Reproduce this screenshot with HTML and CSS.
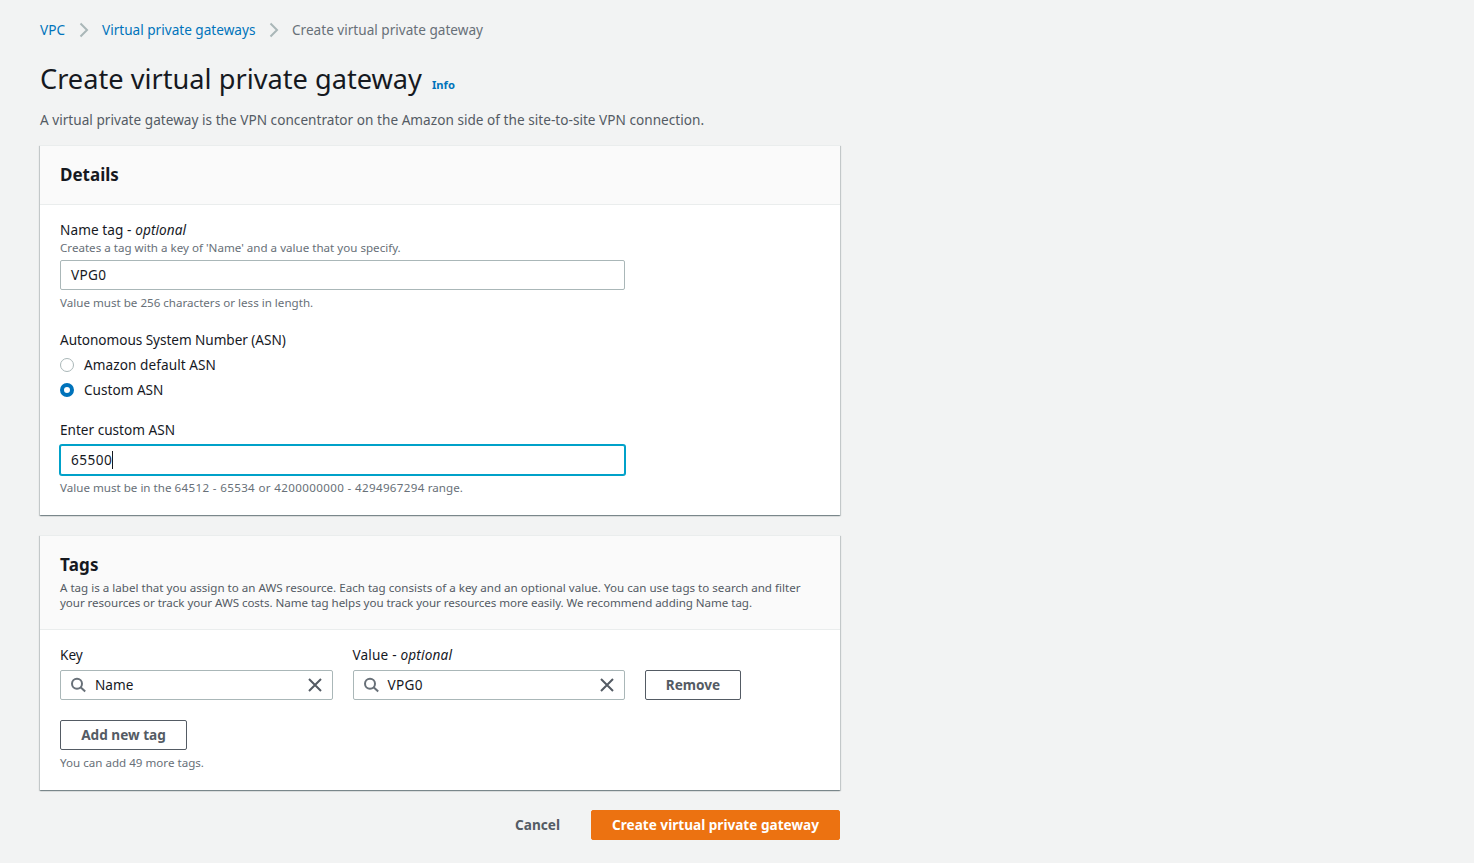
FILE: index.html
```html
<!DOCTYPE html>
<html lang="en">
<head>
<meta charset="utf-8">
<title>Create virtual private gateway</title>
<link rel="stylesheet" href="styles.css">
</head>
<body>
<main class="page">
  <nav class="breadcrumbs">
    <a class="crumb crumb-vpc" href="#">VPC</a>
    <svg class="chevron" width="10" height="16" viewBox="0 0 10 16"><path d="M1.500 1.500 8 8l-6.500 6.500"/></svg>
    <a class="crumb crumb-list" href="#">Virtual private gateways</a>
    <svg class="chevron" width="10" height="16" viewBox="0 0 10 16"><path d="M1.500 1.500 8 8l-6.500 6.500"/></svg>
    <span class="crumb crumb-current">Create virtual private gateway</span>
  </nav>
  <div class="title-row">
    <h1 class="title">Create virtual private gateway</h1>
    <a class="info" href="#">Info</a>
  </div>
  <p class="intro">A virtual private gateway is the VPN concentrator on the Amazon side of the site-to-site VPN connection.</p>

  <section class="card details">
    <header class="card-header"><h2 class="heading heading-details">Details</h2></header>
    <div class="card-body">
      <div class="field">
        <div class="label"><span class="t-name">Name tag - <em>optional</em></span></div>
        <div class="description">Creates a tag with a key of 'Name' and a value that you specify.</div>
        <div class="input"><span class="t-vpg">VPG0</span></div>
        <div class="hint">Value must be 256 characters or less in length.</div>
      </div>
      <div class="field asn">
        <div class="label t-asn">Autonomous System Number (ASN)</div>
        <div class="option"><span class="radio"></span><span class="t-default">Amazon default ASN</span></div>
        <div class="option"><span class="radio checked"></span><span>Custom ASN</span></div>
      </div>
      <div class="field">
        <div class="label">Enter custom ASN</div>
        <div class="input focused"><span class="t-number">65500</span><span class="caret"></span></div>
        <div class="hint">Value must be in the <span class="t-range">64512 - 65534 or 4200000000 - 4294967294</span> range.</div>
      </div>
    </div>
  </section>

  <section class="card tags">
    <header class="card-header">
      <h2 class="heading heading-tags">Tags</h2>
      <p class="tags-text">A tag is a label that you assign to an AWS resource. Each tag consists of a key and an optional value. You can use tags to search and filter<br><span class="t-line2">your resources or track your AWS costs. Name tag helps you track your resources more easily. We recommend adding Name tag.</span></p>
    </header>
    <div class="card-body">
      <div class="tag-row">
        <div class="tag-col">
          <div class="label">Key</div>
          <div class="input search">
            <svg class="lens" width="16" height="16" viewBox="0 0 16 16"><circle cx="6" cy="6.700" r="5"/><path d="m9.600 10.300 4.600 4.300"/></svg>
            <span class="search-text">Name</span>
            <svg class="clear" width="16" height="16" viewBox="0 0 16 16"><path d="m2 2 12 12M14 2 2 14"/></svg>
          </div>
        </div>
        <div class="tag-col">
          <div class="label"><span class="t-value">Value - <em>optional</em></span></div>
          <div class="input search">
            <svg class="lens" width="16" height="16" viewBox="0 0 16 16"><circle cx="6" cy="6.700" r="5"/><path d="m9.600 10.300 4.600 4.300"/></svg>
            <span class="search-text t-vpg">VPG0</span>
            <svg class="clear" width="16" height="16" viewBox="0 0 16 16"><path d="m2 2 12 12M14 2 2 14"/></svg>
          </div>
        </div>
        <button class="button remove">Remove</button>
      </div>
      <button class="button add">Add new tag</button>
      <div class="hint">You can add 49 more tags.</div>
    </div>
  </section>

  <footer class="actions">
    <button class="button cancel">Cancel</button>
    <button class="button primary">Create virtual private gateway</button>
  </footer>
</main>
</body>
</html>
```
FILE: styles.css
```css
* { box-sizing: border-box; }
body {
  margin: 0;
  background: #f2f3f3;
  color: #16191f;
  font: 13.6px/20px "Noto Sans", "Open Sans", sans-serif;
  white-space: nowrap;
}
a { color: #0073bb; text-decoration: none; }
h1, h2, p { margin: 0; }
.page { width: 840px; padding: 20px 0 0 40px; }
.breadcrumbs { display: flex; align-items: center; height: 20px; }
.crumb-vpc { width: 26px; }
.crumb-list { width: 154px; }
.chevron { margin: 0 13px; fill: none; stroke: #aab7b8; stroke-width: 2; overflow: visible; }
.crumb-current { color: #687078; }
.title-row { display: flex; align-items: baseline; height: 36px; margin-top: 21px; }
.title { font-size: 27.2px; line-height: 36px; font-weight: 400; }
.info { margin-left: 10px; font-size: 11.2px; font-weight: 700; }
.intro { margin-top: 13px; color: #545b64; letter-spacing: .024px; }

.card {
  width: 800px;
  background: #fff;
  border-top: 1px solid #eaeded;
  box-shadow: 0 1px 1px 0 rgba(0,28,36,.3), 1px 1px 1px 0 rgba(0,28,36,.15), -1px 1px 1px 0 rgba(0,28,36,.15);
}
.details { height: 370px; margin-top: 15px; }
.tags { height: 255px; margin-top: 20px; }
.card-header { background: #fafafa; border-bottom: 1px solid #eaeded; padding: 18px 20px 0; }
.details .card-header { height: 59px; }
.tags .card-header { height: 94px; }
.heading { font-size: 17px; line-height: 22px; font-weight: 700; }
.heading-tags { letter-spacing: .2px; }
.tags-text { margin-top: 4px; font-size: 11.6px; line-height: 15px; color: #545b64; }
.card-body { padding: 15px 20px 0; }
.label { height: 20px; }
.description { height: 20px; font-size: 11.6px; line-height: 16px; color: #687078; }
.input {
  display: flex; align-items: center;
  width: 565px; height: 30px; padding: 0 10px;
  background: #fff; border: 1px solid #aab7b8; border-radius: 2px;
}
.hint { margin-top: 5px; font-size: 11.6px; line-height: 16px; color: #687078; }
.asn { margin: 19px 0 20px; }
.option { display: flex; align-items: center; height: 20px; margin-top: 5px; }
.radio { width: 14px; height: 14px; margin-right: 10px; border: 1px solid #aab7b8; border-radius: 50%; background: #fff; }
.radio.checked { border: 4px solid #0073bb; }
.details .field:last-child .label { margin-bottom: 5px; }
.focused { border-color: #00a1c9; box-shadow: 0 0 0 1px #00a1c9; }
.caret { width: 1px; height: 18px; background: #16191f; }

/* per-string tracking */
.t-name { letter-spacing: .09px; }
.t-vpg { letter-spacing: .3px; }
.t-asn { letter-spacing: -.05px; }
.t-default { letter-spacing: .07px; }
.t-number { letter-spacing: .45px; }
.t-range { letter-spacing: .35px; }
.t-line2 { letter-spacing: -.057px; }
.t-value { letter-spacing: .17px; }

.tag-row { display: flex; align-items: flex-end; gap: 20px; width: 681px; }
.tag-col { flex: 1; }
.tag-col .label { margin-bottom: 5px; }
.search { width: 100%; }
.search-text { flex: 1; margin-left: 8px; }
.lens { fill: none; stroke: #687078; stroke-width: 2; overflow: visible; }
.clear { margin-right: -1px; fill: none; stroke: #545b64; stroke-width: 2; }
.button {
  height: 30px; padding: 0; border: 1px solid #545b64; border-radius: 2px;
  background: #fff; color: #545b64; font: 700 13.6px/20px "Noto Sans", "Open Sans", sans-serif;
}
.remove { width: 96px; }
.add { display: block; width: 127px; margin-top: 20px; }
.actions { display: flex; justify-content: flex-end; gap: 10px; margin-top: 20px; }
.cancel { width: 87px; background: none; border-color: transparent; }
.primary { width: 249px; background: #ec7211; border-color: #ec7211; color: #fff; }
```
